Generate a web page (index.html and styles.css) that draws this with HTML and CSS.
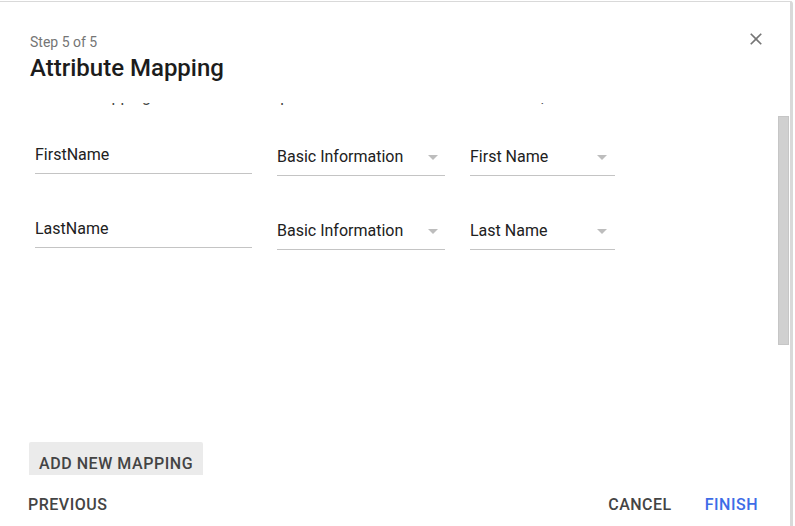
FILE: index.html
```html
<!DOCTYPE html>
<html lang="en">
<head>
<meta charset="utf-8">
<title>Attribute Mapping</title>
<link rel="stylesheet" href="styles.css">
</head>
<body>
<div class="dialog">
  <header class="header">
    <div class="titles">
      <div class="step">Step 5 of 5</div>
      <h1 class="title">Attribute Mapping</h1>
    </div>
    <button class="close" aria-label="Close">
      <svg viewBox="0 0 24 24"><path d="M19 6.41L17.59 5 12 10.59 6.41 5 5 6.41 10.59 12 5 17.59 6.41 19 12 13.41 17.59 19 19 17.59 13.41 12z"/></svg>
    </button>
  </header>
  <div class="body">
    <div class="scroll-content">
      <p class="desc">Set the mapping between the field path and the selected attribute name, then click the finish button.</p>
      <div class="row">
        <div class="field">FirstName</div>
        <div class="select select-category"><span>Basic Information</span><span class="caret"></span></div>
        <div class="select select-attr"><span>First Name</span><span class="caret"></span></div>
      </div>
      <div class="row">
        <div class="field">LastName</div>
        <div class="select select-category"><span>Basic Information</span><span class="caret"></span></div>
        <div class="select select-attr"><span>Last Name</span><span class="caret"></span></div>
      </div>
      <button class="add-btn">ADD NEW MAPPING</button>
    </div>
    <div class="scroll-thumb"></div>
  </div>
  <footer class="footer">
    <button class="btn">PREVIOUS</button>
    <div class="actions">
      <button class="btn">CANCEL</button>
      <button class="btn primary">FINISH</button>
    </div>
  </footer>
</div>
</body>
</html>
```

FILE: styles.css
```css
html, body {
  margin: 0;
  background: #fff;
}

body {
  font-family: Roboto, "Liberation Sans", Arial, sans-serif;
}

.dialog {
  margin-top: 1px;
  width: 793px;
  height: 525px;
  box-sizing: border-box;
  border-top: 1px solid #d9d9d9;
  border-right: 3px solid #d9d9d9;
  border-top-right-radius: 3px;
  display: flex;
  flex-direction: column;
  overflow: hidden;
  background: #fff;
}

.header {
  flex: none;
  display: flex;
  justify-content: space-between;
  align-items: flex-start;
  padding: 30px 24px 19px 30px;
}

.step {
  font-size: 14px;
  line-height: 20px;
  color: #757575;
}

.title {
  margin: 0;
  font-size: 24px;
  line-height: 32px;
  font-weight: 500;
  color: #1c1c1c;
}

.close {
  margin-top: -3px;
  width: 20px;
  height: 20px;
  padding: 0;
  border: 0;
  background: none;
  display: block;
}

.close svg {
  display: block;
  width: 20px;
  height: 20px;
  fill: #757575;
}

.body {
  flex: none;
  position: relative;
  height: 372px;
  overflow: hidden;
}

.scroll-content {
  margin-top: -18px;
  padding-left: 29px;
}

.desc {
  margin: 0 0 0 6px;
  font-size: 16px;
  line-height: 24px;
  color: #424242;
  white-space: nowrap;
}

.row {
  display: flex;
  align-items: flex-start;
  gap: 25px;
  margin: 34px 0 0 6px;
}

.row + .row {
  margin-top: 41px;
}

.field {
  width: 217px;
  box-sizing: border-box;
  font-size: 16px;
  line-height: 24px;
  color: #212121;
  padding-bottom: 6px;
  border-bottom: 1px solid #c4c4c4;
}

.select {
  margin-top: 2px;
  display: flex;
  align-items: center;
  justify-content: space-between;
  box-sizing: border-box;
  padding: 0 7px 6px 0;
  border-bottom: 1px solid #c4c4c4;
  font-size: 16px;
  line-height: 24px;
  color: #212121;
}

.select-category {
  width: 168px;
}

.select-attr {
  width: 145px;
  padding-right: 8px;
}

.caret {
  width: 0;
  height: 0;
  border-left: 5px solid transparent;
  border-right: 5px solid transparent;
  border-top: 5px solid #bdbdbd;
}

.add-btn {
  display: block;
  margin-top: 192px;
  margin-bottom: 160px;
  padding: 10px 10px;
  font: inherit;
  font-size: 16px;
  font-weight: 500;
  line-height: 24px;
  letter-spacing: 0.55px;
  color: #444;
  background: #ebebeb;
  border: 0;
  border-radius: 2px;
}

.scroll-thumb {
  position: absolute;
  top: 13px;
  right: 1px;
  width: 11px;
  height: 229px;
  box-sizing: border-box;
  background: #d0d0d0;
  border: 1px solid #c6c6c6;
}

.footer {
  flex: none;
  display: flex;
  justify-content: space-between;
  align-items: flex-start;
  padding: 18px 32px 0 28px;
}

.actions {
  display: flex;
  gap: 33px;
}

.btn {
  font: inherit;
  font-size: 16px;
  font-weight: 500;
  line-height: 24px;
  letter-spacing: 0.5px;
  color: #444;
  background: none;
  border: 0;
  padding: 0;
}

.btn.primary {
  color: #3d6ce7;
}
```
